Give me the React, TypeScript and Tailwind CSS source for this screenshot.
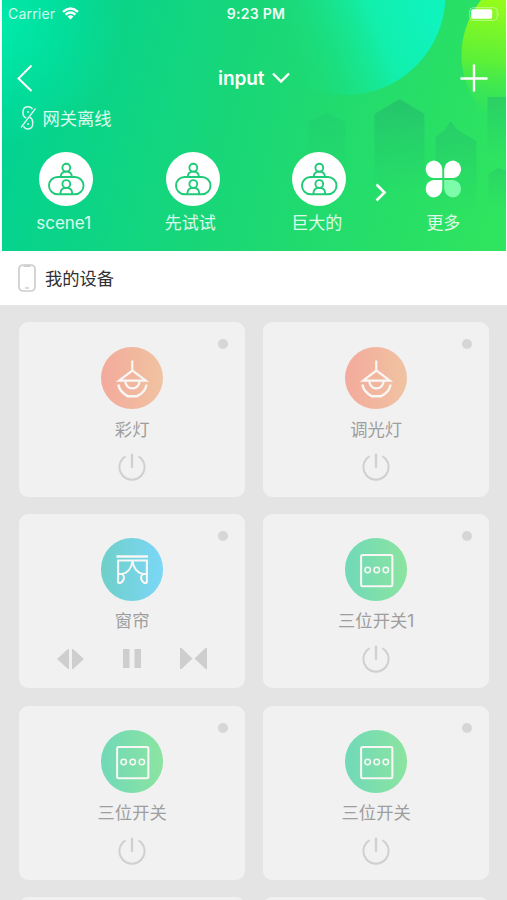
import React from 'react';

const FONT = "font-['Inter','Noto_Sans_CJK_SC',sans-serif]";

function HeaderArt() {
  return (
    <svg className="absolute inset-0 h-full w-full" viewBox="1.5 0 504 250.5" preserveAspectRatio="none" aria-hidden="true">
      <defs>
        <linearGradient id="bg" gradientUnits="userSpaceOnUse" x1="0" y1="60" x2="507" y2="190">
          <stop offset="0" stopColor="#00d294" />
          <stop offset="0.5" stopColor="#1bd775" />
          <stop offset="1" stopColor="#2fe45e" />
        </linearGradient>
        <radialGradient id="glow" gradientUnits="userSpaceOnUse" cx="0" cy="25" r="120">
          <stop offset="0" stopColor="#00eaaa" />
          <stop offset="1" stopColor="#00eaaa" stopOpacity="0" />
        </radialGradient>
        <linearGradient id="cyan" gradientUnits="userSpaceOnUse" x1="430" y1="20" x2="290" y2="75">
          <stop offset="0" stopColor="#0ff3bd" />
          <stop offset="0.35" stopColor="#12efac" />
          <stop offset="1" stopColor="#18dc7c" stopOpacity="0" />
        </linearGradient>
        <linearGradient id="lime" gradientUnits="userSpaceOnUse" x1="500" y1="0" x2="480" y2="125">
          <stop offset="0" stopColor="#96fc1a" />
          <stop offset="0.5" stopColor="#5cf038" />
          <stop offset="1" stopColor="#30e35c" stopOpacity="0" />
        </linearGradient>
        <linearGradient id="tower" x1="0" y1="0" x2="0" y2="1">
          <stop offset="0" stopColor="#25bf6c" stopOpacity="0.8" />
          <stop offset="1" stopColor="#20c96b" stopOpacity="0" />
        </linearGradient>
      </defs>
      <rect width="507" height="251" fill="url(#bg)" />
      <rect width="200" height="200" fill="url(#glow)" />
      <circle cx="345" cy="-5" r="100" fill="url(#cyan)" />
      <circle cx="548" cy="55" r="87" fill="url(#lime)" />
      <path d="M308 122L326 113L345 122V195H308Z" fill="url(#tower)" opacity=".35" />
      <path d="M374 114L399 99L424 114V196H374Z" fill="url(#tower)" />
      <path d="M435 137L444 130L450 121L457 130L476 141V212H435Z" fill="url(#tower)" opacity=".7" />
      <path d="M487 97H507V156H487Z" fill="url(#tower)" opacity=".7" />
      <path d="M488 174L498 168L507 171V208H488Z" fill="url(#tower)" opacity=".5" />
    </svg>
  );
}

function StatusBar() {
  return (
    <div className="grid h-[27px] grid-cols-3 items-center pl-[6.5px] text-white">
      <div className="flex items-center gap-[7px]">
        <span className="text-[14px] tracking-[0.2px] text-white/80">Carrier</span>
        <svg width="17" height="13" viewBox="0 0 17 13" fill="none" stroke="white" strokeWidth="2.3">
          <path d="M1 4.8Q8.5-1.9 16 4.8M3.6 7.7Q8.5 3.4 13.4 7.7" />
          <path d="M5.6 9.5Q8.5 7.2 11.4 9.5L8.5 12.4Z" fill="white" stroke="none" />
        </svg>
      </div>
      <span className="-ml-[1.5px] whitespace-nowrap text-center text-[14px] font-semibold tracking-[0.3px] text-white/95">9:23 PM</span>
      <svg className="ml-auto mr-[4px]" width="32" height="14" viewBox="0 0 32 14">
        <rect x=".7" y=".7" width="27.5" height="12.6" rx="3.5" fill="none" stroke="white" strokeOpacity=".45" />
        <rect x="2.2" y="2.3" width="21" height="9.4" rx="2" fill="white" />
        <path d="M29.5 4.5Q31 7 29.5 9.5Z" fill="white" fillOpacity=".45" />
      </svg>
    </div>
  );
}

function SceneIcon() {
  return (
    <div className="flex size-[54px] items-center justify-center rounded-full bg-white">
      <svg width="54" height="54" viewBox="0 0 54 54" fill="none" stroke="#1fca78" strokeWidth="1.9">
        <rect x="10" y="25" width="34.5" height="17.3" rx="8.6" />
        <circle cx="27.3" cy="15.7" r="3.9" />
        <path d="M21.8 25V24Q22.2 19.6 27.3 19.6Q32.4 19.6 32.8 24V25" />
        <circle cx="27.3" cy="32" r="3.9" />
        <path d="M21.5 42V40.5Q22 35.9 27.3 35.9Q32.6 35.9 33.1 40.5V42" />
      </svg>
    </div>
  );
}

function Scene({ name }: { name: string }) {
  return (
    <div className="flex w-[126.5px] shrink-0 flex-col items-center">
      <SceneIcon />
      <span className="mr-[5.5px] mt-[4px] whitespace-nowrap text-[17px] leading-[26px] text-white/85">{name}</span>
    </div>
  );
}

function Header() {
  return (
    <header className="relative ml-[1.5px] h-[250.5px] w-[504px] overflow-hidden">
      <HeaderArt />
      <div className="relative">
        <StatusBar />
        <div className="mt-[35px] flex h-8 items-center justify-between pl-[15.5px] pr-[17.5px] text-white">
          <svg width="16" height="28" viewBox="0 0 16 28" fill="none" stroke="white" strokeWidth="2">
            <path d="M14.5 1.5L1.5 14.5L14.5 27" />
          </svg>
          <div className="ml-[15px] flex items-center gap-[7.5px]">
            <span className="mt-[2px] text-[19px] font-semibold tracking-[-0.1px]">input</span>
            <svg width="18" height="12" viewBox="0 0 18 12" fill="none" stroke="white" strokeWidth="2.4">
              <path d="M1 1.5L9 9.5L17 1.5" />
            </svg>
          </div>
          <svg width="28" height="28" viewBox="0 0 28 28" stroke="white" strokeWidth="2.4">
            <path d="M14 .5V27.5M.5 14.5H27.5" />
          </svg>
        </div>
        <div className="mt-[10px] flex h-7 items-center gap-[6px] pl-[18px] text-white/85">
          <svg width="17" height="26" viewBox="0 0 17 26" fill="none" stroke="white" strokeOpacity=".85" strokeWidth="1.5">
            <path d="M6.2 13.2Q3 11.5 3 8.5V7Q3 1.8 8 1.8Q11.2 1.8 12.4 4.2M9.6 12.2Q12.7 14 12.7 17V18.6Q12.7 24 8 24Q5 24 3.6 21.4" />
            <path d="M15.5 3.5L1 22.5M7 7H9M7 19H9" strokeWidth="1.3" />
          </svg>
          <span className="mt-px text-[17.3px] leading-none">网关离线</span>
        </div>
        <div className="mt-[19.5px] flex pl-[1.7px]">
          <Scene name="scene1" />
          <Scene name="先试试" />
          <Scene name="巨大的" />
          <svg className="-ml-[8px] mt-[31.5px] shrink-0" width="12" height="19" viewBox="0 0 12 19" fill="none" stroke="white" strokeWidth="2.6">
            <path d="M1.5 1.5L9.5 9.5L1.5 17.5" />
          </svg>
          <div className="ml-[28.7px] flex w-[56px] shrink-0 flex-col items-center">
            <svg width="54" height="54" viewBox="0 0 54 54" fill="white">
              <path d="M17.5 8.5A9 9 0 0 1 26.3 17.5V26H17.5A8.8 8.8 0 0 1 17.5 8.5Z" />
              <path d="M37.2 8.5A9 9 0 0 0 28.2 17.5V26H37.2A8.8 8.8 0 0 0 37.2 8.5Z" />
              <path d="M17.5 45.5A9 9 0 0 0 26.3 36.5V28H17.5A8.8 8.8 0 0 0 17.5 45.5Z" />
              <path d="M37.2 45.5A9 9 0 0 1 28.2 36.5V28H37.2A8.8 8.8 0 0 1 37.2 45.5Z" fill="#7dfca9" />
            </svg>
            <span className="mt-[4px] whitespace-nowrap text-[17px] leading-[26px] text-white/85">更多</span>
          </div>
        </div>
      </div>
    </header>
  );
}

type Kind = 'lamp' | 'curtain' | 'switch';

function DeviceIcon({ kind }: { kind: Kind }) {
  const tone = {
    lamp: 'from-[#f3aa9c] to-[#f0c3a1]',
    curtain: 'from-[#6fcfc8] to-[#7bd7f7]',
    switch: 'from-[#70d9b8] to-[#8be4a0]',
  }[kind];
  return (
    <div className={'size-[62.5px] shrink-0 rounded-full bg-linear-to-r ' + tone}>
      <svg className="size-full" viewBox="0 0 62 62" fill="none" stroke="#f8f7f5" strokeWidth="2">
        {kind === 'lamp' && (
          <>
            <path d="M31 13.5V23.5L18 33.3H44.5L31 23.2M24 33.3A7.2 7.8 0 0 0 38.4 33.3" strokeWidth="2.2" />
            <path d="M17.2 37.3C18.2 42.5 22 46.5 26.5 48.8H35.8C40.5 46.5 44.3 42.5 45.2 37.3" strokeWidth="2.4" />
          </>
        )}
        {kind === 'curtain' && (
          <>
            <path d="M15.3 18.4H46.7" strokeWidth="2.4" />
            <path d="M17 45V22.3H45.5V45" />
            <path d="M31.2 22.3C30.5 29.5 26.5 34.8 20.5 35.6H17M31.2 22.3C31.9 29.5 36 34.8 42 35.6H45.5" />
            <path d="M17 44.6H19.5Q22.8 42.5 22.8 39.3Q22.8 36.8 20.5 35.6M45.5 44.6H43Q39.7 42.5 39.7 39.3Q39.7 36.8 42 35.6" />
          </>
        )}
        {kind === 'switch' && (
          <>
            <rect x="16" y="16.8" width="31" height="31" rx="1.5" strokeWidth="2" />
            <circle cx="22.5" cy="31.8" r="2.7" strokeWidth="1.5" />
            <circle cx="31.5" cy="31.8" r="2.7" strokeWidth="1.5" />
            <circle cx="40.5" cy="31.8" r="2.7" strokeWidth="1.5" />
          </>
        )}
      </svg>
    </div>
  );
}

function Power() {
  return (
    <svg width="28" height="28" viewBox="0 0 28 28" fill="none" stroke="#d0d0d0" strokeWidth="2">
      <path d="M7.5 3.3A12.6 12.6 0 1 0 20.5 3.3" />
      <path d="M14 .7V14.8" strokeWidth="2.3" />
    </svg>
  );
}

function CurtainControls() {
  return (
    <div className="flex h-7 w-[150px] items-center justify-between">
      <svg width="27" height="20" viewBox="0 0 27 20" fill="#cecece">
        <path d="M12 0V20H11L0 10L11 0ZM15 0V20H16L27 10L16 0Z" />
      </svg>
      <svg width="18" height="19" viewBox="0 0 18 19" fill="#cecece">
        <path d="M0 0H6.5V19H0ZM11.5 0H18V19H11.5Z" />
      </svg>
      <svg width="27" height="21" viewBox="0 0 27 21" fill="#cecece">
        <path d="M0 0H1.5L12.5 10.5L1.5 21H0ZM27 0H25.5L14.5 10.5L25.5 21H27Z" />
      </svg>
    </div>
  );
}

function DeviceCard({ name, kind }: { name: string; kind: Kind }) {
  return (
    <div className="relative flex h-[174.7px] flex-col items-center rounded-[9px] bg-[#f1f1f1] pt-[24.5px]">
      <span className="absolute right-[17px] top-[17px] size-[10px] rounded-full bg-[#d6d6d6]" />
      <DeviceIcon kind={kind} />
      <span className="mt-[7.6px] text-[17.3px] leading-[26px] text-[#9e9e9e]">{name}</span>
      <div className="mt-[10.4px]">{kind === 'curtain' ? <CurtainControls /> : <Power />}</div>
    </div>
  );
}

const devices: { name: string; kind: Kind }[] = [
  { name: '彩灯', kind: 'lamp' },
  { name: '调光灯', kind: 'lamp' },
  { name: '窗帘', kind: 'curtain' },
  { name: '三位开关1', kind: 'switch' },
  { name: '三位开关', kind: 'switch' },
  { name: '三位开关', kind: 'switch' },
];

export default function App() {
  return (
    <div className={'h-[900px] w-[507px] overflow-hidden bg-white ' + FONT}>
      <Header />
      <div className="flex h-[54.5px] items-center gap-[9px] bg-white pl-[18px]">
        <svg width="18" height="28" viewBox="0 0 18 28" fill="none" stroke="#cdcdcd" strokeWidth="1.7">
          <rect x="1" y="1" width="16" height="26" rx="4" />
          <path d="M5.5 2.2H12.5M7 24H11" />
        </svg>
        <span className="mt-px text-[17.3px] leading-none text-[#303030]">我的设备</span>
      </div>
      <main className="grid h-[595px] grid-cols-[225.5px_225.5px] content-start gap-x-[18.5px] gap-y-[17.1px] overflow-hidden bg-[#e4e4e4] pl-[19.4px] pt-[17px]">
        {devices.map((d, i) => (
          <DeviceCard key={i} name={d.name} kind={d.kind} />
        ))}
        <div className="h-[174.7px] rounded-[9px] bg-[#f1f1f1]" />
        <div className="h-[174.7px] rounded-[9px] bg-[#f1f1f1]" />
      </main>
    </div>
  );
}
